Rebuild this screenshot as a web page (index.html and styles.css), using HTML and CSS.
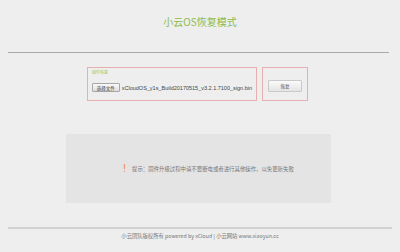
FILE: index.html
```html
<!DOCTYPE html>
<html lang="zh-CN">

<head>
    <meta charset="UTF-8">
    <meta name="viewport" content="width=device-width, initial-scale=1.0">
    <title>小云OS恢复模式</title>
    <link rel="stylesheet" href="styles.css">
</head>

<body>
    <div class="header">
        <h1 class="title">小云OS恢复模式</h1>
    </div>
    <div class="divider"></div>

    <div class="upgrade-row">
        <div class="file-box">
            <div class="file-label">固件恢复</div>
            <div class="file-pick">
                <button class="pick-btn">选择文件</button>
                <span class="file-name">xCloudOS_y1s_Build20170515_v3.2.1.7100_sign.bin</span>
            </div>
        </div>
        <div class="action-box">
            <button class="restore-btn">恢复</button>
        </div>
    </div>

    <div class="notice">
        <span class="notice-icon">!</span>
        <span class="notice-text">提示：固件升级过程中请不要断电或者进行其他操作，以免更新失败</span>
    </div>

    <div class="footer">
        <p class="copyright">小云团队版权所有 powered by xCloud | 小云网站 www.xiaoyun.cc</p>
    </div>
</body>

</html>
```

FILE: styles.css
```css
body {
    font-family: "Noto Sans CJK SC", "Noto Sans", sans-serif;
    background-color: #eeeeee;
    margin: 0;
    padding: 0;
    color: #555;
}

.header {
    height: 52px;
    padding-top: 16px;
    box-sizing: border-box;
    text-align: center;
}

.title {
    margin: 0;
    font-size: 10px;
    line-height: 12px;
    font-weight: normal;
    color: #8dbb4a;
}

.divider {
    margin: 0 11px 0 8px;
    border-top: 1px solid #a9a9a9;
}

.upgrade-row {
    display: flex;
    margin: 14px 0 0 87px;
    height: 34px;
}

.file-box {
    width: 170px;
    border: 1px solid #e6b0b0;
    box-sizing: border-box;
    padding: 1px 4px;
}

.file-label {
    font-size: 4px;
    line-height: 6px;
    color: #9bc65a;
}

.file-pick {
    display: flex;
    align-items: center;
    margin-top: 8px;
}

.pick-btn {
    font-family: inherit;
    font-size: 4.5px;
    height: 9px;
    width: 29px;
    padding: 0;
    line-height: 6px;
    border: 1px solid #a7a7a7;
    border-radius: 1px;
    background: linear-gradient(#fafafa, #dedede);
    color: #333;
}

.file-name {
    margin-left: 2px;
    font-family: "Liberation Sans", Arial, sans-serif;
    font-size: 5.5px;
    color: #444;
    white-space: nowrap;
}

.action-box {
    width: 46px;
    margin-left: 5px;
    border: 1px solid #e6b0b0;
    box-sizing: border-box;
    display: flex;
    justify-content: center;
    align-items: center;
    padding-top: 3px;
}

.restore-btn {
    font-family: inherit;
    font-size: 4.5px;
    width: 34px;
    height: 12px;
    padding: 0;
    border: 1px solid #c9c9c9;
    border-radius: 1px;
    background: linear-gradient(#fbfbfb, #e4e4e4);
    color: #555;
}

.notice {
    display: flex;
    align-items: center;
    width: 265px;
    height: 69px;
    margin: 33px 0 0 66px;
    padding-left: 57px;
    box-sizing: border-box;
    background-color: #e4e4e4;
}

.notice-icon {
    font-family: "Liberation Sans", Arial, sans-serif;
    font-size: 11px;
    line-height: 11px;
    color: #f08a4e;
    margin-right: 6px;
}

.notice-text {
    font-size: 5.4px;
    color: #777;
    white-space: nowrap;
}

.footer {
    margin: 24px 8px 0 8px;
    border-top: 2px solid #d2d2d2;
    text-align: center;
}

.copyright {
    margin: 4px 0 0 0;
    font-size: 5.3px;
    line-height: 7px;
    color: #777;
}
```
